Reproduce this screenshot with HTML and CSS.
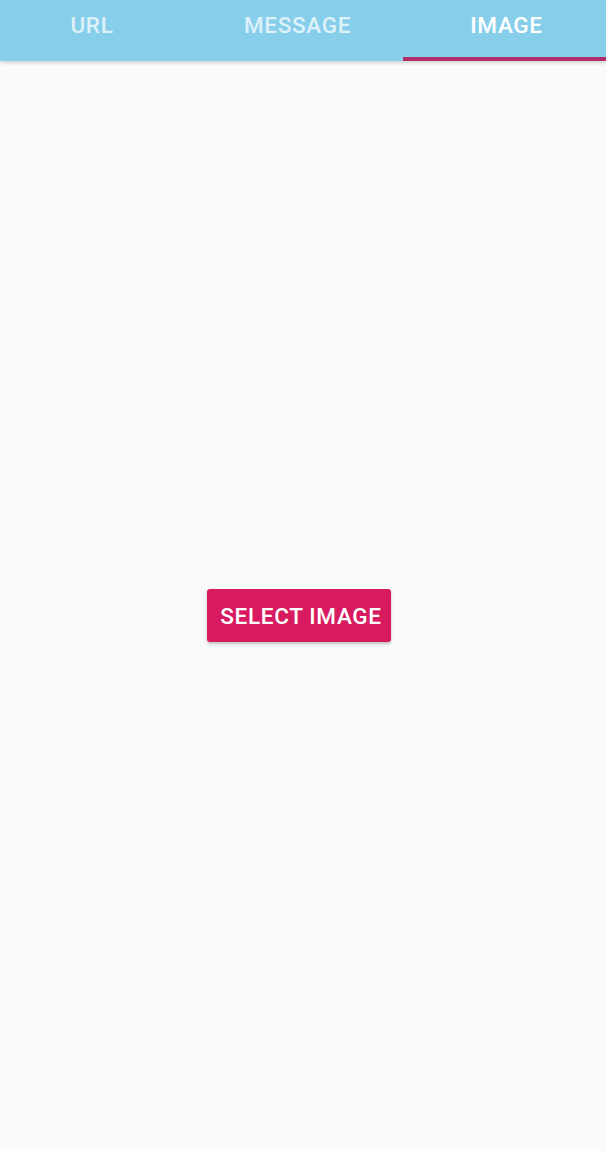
FILE: index.html
```html
<!DOCTYPE html>
<html>
<head>
<meta charset="utf-8">
<link rel="stylesheet" href="styles.css">
</head>
<body>
<div class="app">
  <div class="tabs">
    <div class="tab tab-url">URL</div>
    <div class="tab tab-msg">MESSAGE</div>
    <div class="tab active">IMAGE</div>
  </div>
  <div class="content">
    <button class="btn">SELECT IMAGE</button>
  </div>
</div>
</body>
</html>
```
FILE: styles.css
```css
html, body {
  margin: 0;
  padding: 0;
  height: 100%;
  background: #fafafa;
  font-family: Roboto, "Noto Sans", sans-serif;
}
.app {
  display: flex;
  flex-direction: column;
  height: 1151px;
}
.tabs {
  display: grid;
  grid-template-columns: 183px 220px 1fr;
  height: 61px;
  background: #87ceeb;
  box-shadow: 0 2px 4px rgba(0,0,0,0.16);
  position: relative;
  z-index: 1;
}
.tab {
  display: flex;
  align-items: center;
  justify-content: center;
  color: rgba(255,255,255,0.72);
  font-size: 22.5px;
  font-weight: 500;
  letter-spacing: 0.03em;
  padding-bottom: 7px;
  padding-left: 1px;
  box-sizing: border-box;
  border-bottom: 4px solid transparent;
}
.tab-msg {
  padding-left: 9px;
}
.tab.active {
  color: #ffffff;
  padding-left: 4px;
  border-bottom-color: #b02d69;
}
.content {
  flex: 1;
  display: flex;
  justify-content: center;
  padding-top: 528px;
  padding-right: 8px;
  align-items: flex-start;
}
.btn {
  width: 184px;
  height: 53px;
  background: #d81b60;
  color: #fff;
  border: none;
  border-radius: 3px;
  font-family: Roboto, "Noto Sans", sans-serif;
  font-size: 22.5px;
  font-weight: 500;
  letter-spacing: 0.03em;
  padding: 0 0 0 4px;
  box-shadow: 0 2px 3px rgba(0,0,0,0.22);
}
```
